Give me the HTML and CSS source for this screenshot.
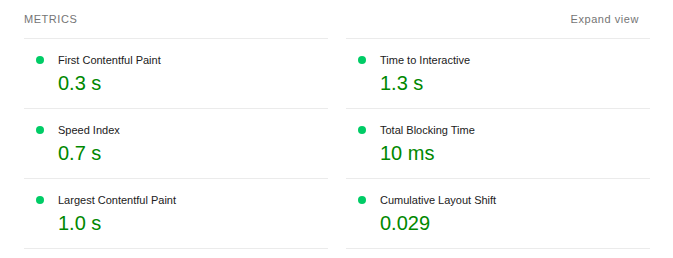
FILE: index.html
```html
<!DOCTYPE html>
<html lang="en">
  <head>
    <meta charset="UTF-8" />
    <meta name="viewport" content="width=device-width, initial-scale=1.0" />
    <title>Metrics</title>
    <link rel="stylesheet" href="styles.css">
  </head>
  <body>
    <div class="metrics">
      <div class="metrics-head">
        <span class="metrics-title">Metrics</span>
        <span class="metrics-toggle">Expand view</span>
      </div>

      <div class="metrics-grid">
        <div class="metric">
          <div class="metric-title">First Contentful Paint</div>
          <div class="metric-value">0.3&nbsp;s</div>
        </div>
        <div class="metric">
          <div class="metric-title">Time to Interactive</div>
          <div class="metric-value">1.3&nbsp;s</div>
        </div>
        <div class="metric">
          <div class="metric-title">Speed Index</div>
          <div class="metric-value">0.7&nbsp;s</div>
        </div>
        <div class="metric">
          <div class="metric-title">Total Blocking Time</div>
          <div class="metric-value">10&nbsp;ms</div>
        </div>
        <div class="metric">
          <div class="metric-title">Largest Contentful Paint</div>
          <div class="metric-value">1.0&nbsp;s</div>
        </div>
        <div class="metric">
          <div class="metric-title">Cumulative Layout Shift</div>
          <div class="metric-value">0.029</div>
        </div>
      </div>
    </div>
  </body>
</html>
```

FILE: styles.css
```css
body {
  margin: 0;
  background: #fff;
  font-family: "Liberation Sans", Arial, sans-serif;
}

.metrics {
  padding: 0 23px 0 24px;
}

.metrics-head {
  display: flex;
  justify-content: space-between;
  align-items: center;
  height: 38px;
  font-size: 11px;
  letter-spacing: 0.55px;
  color: #757575;
}

.metrics-title {
  text-transform: uppercase;
}

.metrics-toggle {
  padding-right: 11px;
}

.metrics-grid {
  display: grid;
  grid-template-columns: 1fr 1fr;
  column-gap: 18px;
}

.metric {
  border-bottom: 1px solid #ebebeb;
  padding: 12px 0 13px 34px;
  height: 44px;
  position: relative;
}

.metric:nth-child(-n+2) {
  border-top: 1px solid #ebebeb;
}

.metric::before {
  content: "";
  position: absolute;
  left: 12px;
  top: 17px;
  width: 8px;
  height: 8px;
  border-radius: 50%;
  background: #0c6;
}

.metric-title {
  font-size: 11px;
  line-height: 18px;
  color: #212121;
}

.metric-value {
  margin-top: 2px;
  font-size: 20px;
  line-height: 24px;
  color: #080;
}
```
